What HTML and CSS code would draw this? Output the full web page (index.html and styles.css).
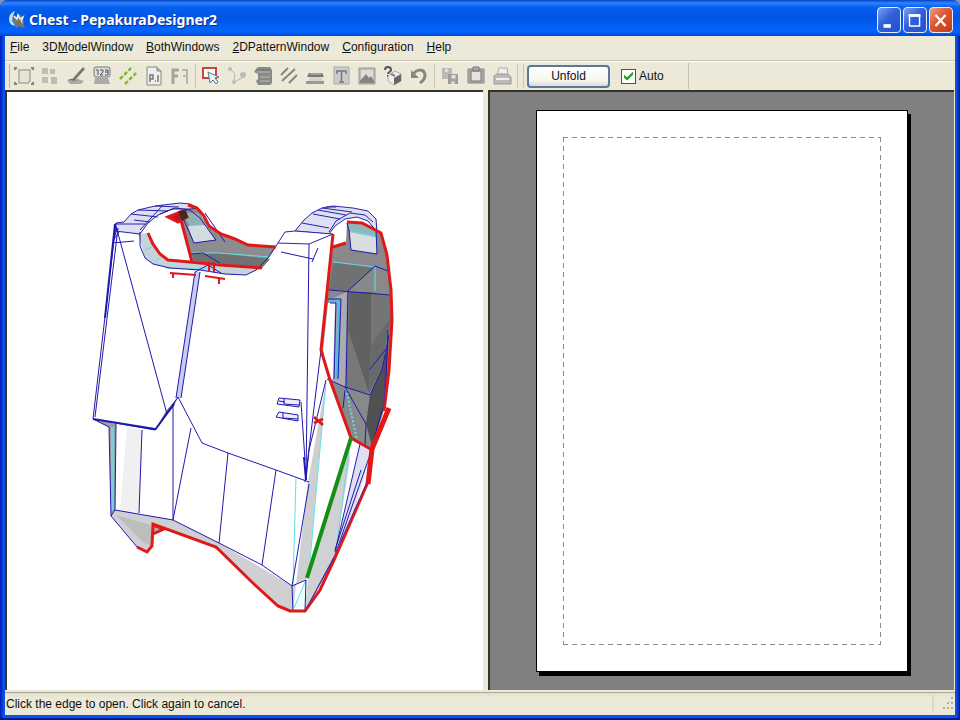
FILE: index.html
```html
<!DOCTYPE html>
<html lang="en">
<head>
<meta charset="utf-8">
<title>Chest - PepakuraDesigner2</title>
<link rel="stylesheet" href="styles.css">
</head>
<body>
<div class="window">
  <header class="titlebar">
    <svg class="app-icon" viewBox="0 0 18 20" aria-hidden="true">
      <path d="M7 1C1 3 0 9 2 13c2 3 5 3 7 2C4 13 4 6 7 1z" fill="#b9e4ff"/>
      <path d="M5 5l4 3 2-4 3 2 2 6-1 6-4-2-3 2-2-4-2-3z" fill="#5d7d96"/>
      <path d="M6 6l3 3 1-4 2 4 3-2-2 5 2 4" fill="none" stroke="#f2f2e8" stroke-width="1.5"/>
      <path d="M8 15l3-4 5 6" fill="none" stroke="#9a6a3a" stroke-width="2"/>
    </svg>
    <h1 class="title">Chest - PepakuraDesigner2</h1>
    <div class="caption-buttons">
      <button class="caption" aria-label="Minimize"><svg viewBox="0 0 24 25"><path d="M6 17h8v4H6z" fill="#fff"/></svg></button>
      <button class="caption" aria-label="Maximize"><svg viewBox="0 0 24 25"><path d="M6 8v11h11V8z" fill="none" stroke="#fff" stroke-width="1.5"/><path d="M5 6h13v3H5z" fill="#fff"/></svg></button>
      <button class="caption close" aria-label="Close"><svg viewBox="0 0 24 25"><path d="M6 7l11 12M17 7L6 19" stroke="#fff" stroke-width="2.5"/></svg></button>
    </div>
  </header>

  <div class="client">
    <nav class="menubar">
      <button><u>F</u>ile</button>
      <button>3D<u>M</u>odelWindow</button>
      <button><u>B</u>othWindows</button>
      <button><u>2</u>DPatternWindow</button>
      <button><u>C</u>onfiguration</button>
      <button><u>H</u>elp</button>
    </nav>

    <div class="toolbar">
      <span class="grip red"></span>
      <button class="tool" aria-label="Select area"><svg viewBox="0 0 20 20"><path d="M5 4h11v11l-2 2H5z" fill="#e6e4d6" stroke="#aaa89e" stroke-width="1.5"/><path d="M1 4V2h2M17 2h2v2M1 16v2h2M17 18h2v-2" fill="none" stroke="#88877f" stroke-width="2"/></svg></button>
      <button class="tool" aria-label="Arrange"><svg viewBox="0 0 20 20"><path d="M2 2h6v6H2zM10 3h5v5h-5zM2 11h6v6H2zM11 11h6v7h-6z" fill="#bebdb5"/></svg></button>
      <button class="tool" aria-label="Paint"><svg viewBox="0 0 20 20"><path d="M1 14l8-2 9 3-3 3H4z" fill="#aaa"/><path d="M17 1l2 2-8 9-5 4 2-5z" fill="#777"/><path d="M3 14l5-1 2 2" stroke="#666" fill="none"/></svg></button>
      <button class="tool" aria-label="Edge numbers"><svg viewBox="0 0 20 20"><path d="M3 12h13l2 6H2z" fill="#aaa"/><rect x="2" y="1" width="16" height="10" rx="2" fill="#ddd" stroke="#777"/><path d="M4 4h2v5M8 4h3v2L8 9h3M13 4h3v5h-3M13 6h3" fill="none" stroke="#555"/></svg></button>
      <button class="tool" aria-label="Fold lines"><svg viewBox="0 0 20 20"><path d="M2 13L13 2M7 18L18 7" stroke="#7dbb32" stroke-width="2.5" stroke-dasharray="4 2"/></svg></button>
      <button class="tool" aria-label="Page number"><svg viewBox="0 0 20 20"><path d="M3 1h10l4 4v14H3z" fill="#eee" stroke="#888"/><path d="M13 1v4h4" fill="#bbb" stroke="#888"/><path d="M6 16V9h3v4H6M11 15h1M14 9v7" fill="none" stroke="#777" stroke-width="1.5"/></svg></button>
      <button class="tool" aria-label="Mirror"><svg viewBox="0 0 20 20"><path d="M3 18V4h6M3 10h5" fill="none" stroke="#a5a49b" stroke-width="3"/><path d="M17 18V4h-5M17 10h-4" fill="none" stroke="#b8b7ae" stroke-width="2"/></svg></button>
      <span class="divider"></span>
      <button class="tool" aria-label="Open edge"><svg viewBox="0 0 20 20"><path d="M2 2h13v10H2z" fill="#fff" stroke="#c9443b" stroke-width="2"/><path d="M7 6l11 5-4 1 3 4-2 2-3-4-3 3z" fill="#dff4ff" stroke="#55788c"/></svg></button>
      <button class="tool" aria-label="Join edges"><svg viewBox="0 0 20 20"><path d="M3 3l5 5-1 8 8-4 2-4" fill="none" stroke="#b5b4aa"/><circle cx="3" cy="3" r="2" fill="#bbb"/><circle cx="7" cy="16" r="2" fill="#bbb"/><circle cx="16" cy="9" r="3" fill="#bbb"/></svg></button>
      <button class="tool" aria-label="Flaps"><svg viewBox="0 0 20 20"><path d="M3 3l2-2h12l2 3v13l-2 2H5l-2-4 2-2V8L1 6z" fill="#8a8a86"/><path d="M4 6h13M7 11h10M7 15h10" stroke="#bbb"/><path d="M4 4h13" stroke="#555" stroke-dasharray="1 1"/></svg></button>
      <button class="tool" aria-label="Hatching"><svg viewBox="0 0 20 20"><path d="M2 9l7-7M3 15L16 3M10 17l8-8" stroke="#858580" stroke-width="2"/></svg></button>
      <button class="tool" aria-label="Flatten"><svg viewBox="0 0 20 20"><path d="M4 7h13l2 4H2z" fill="#777"/><path d="M5 8h11" stroke="#ccc"/><path d="M5 11h11l2 4H3z" fill="#d5d4ca"/><path d="M1 15h18v3H1z" fill="#999"/></svg></button>
      <button class="tool" aria-label="Text"><svg viewBox="0 0 20 20"><path d="M3 1h15v17H3z" fill="#ccc" stroke="#aaa"/><path d="M6 8V5h9v3M10.500 5v11M8 16h5" fill="none" stroke="#777" stroke-width="1.5"/></svg></button>
      <button class="tool" aria-label="Image"><svg viewBox="0 0 20 20"><path d="M2 2h16v16H2z" fill="#bcbcb8" stroke="#999"/><path d="M4 4h12v9H4z" fill="#ddd"/><path d="M3 15l6-7 3 4 2-2 3 5v2H3z" fill="#858580"/></svg></button>
      <button class="tool" aria-label="Model help"><svg viewBox="0 0 20 20"><path d="M2 4c0-4 6-4 6 0 0 2-3 2-3 4M5 9v2" fill="none" stroke="#555" stroke-width="2"/><path d="M5 10l7-5 6 3v7l-7 4-6-4z" fill="#eee" stroke="#aaa"/><path d="M11 12l7-4v7l-7 4z" fill="#666"/><path d="M8 8l4 2" stroke="#888" stroke-width="2"/></svg></button>
      <button class="tool" aria-label="Undo"><svg viewBox="0 0 20 20"><path d="M4 9C7 3 15 2 16 9c0 4-2 6-5 8" fill="none" stroke="#888780" stroke-width="3"/><path d="M2 4v8h8z" fill="#888780"/></svg></button>
      <span class="divider"></span>
      <button class="tool" aria-label="Copy"><svg viewBox="0 0 20 20"><path d="M2 2h10v11H2z" fill="#bbb"/><path d="M8 8h10v10H8z" fill="#9b9b98"/><path d="M4 3v4h5V3M11 9v4h5V9M11 18v-3h4v3" fill="#ddd" stroke="#aaa"/></svg></button>
      <button class="tool" aria-label="Paste"><svg viewBox="0 0 20 20"><path d="M2 3h16v14H2z" fill="#aaa" stroke="#888"/><path d="M5 5h10v10H5z" fill="#e6e5dc" stroke="#777"/><path d="M7 1h6v4H7z" fill="#aaa" stroke="#777"/></svg></button>
      <button class="tool" aria-label="Print"><svg viewBox="0 0 20 20"><path d="M5 9l2-7h8l1 7" fill="#eee" stroke="#aaa"/><path d="M2 10l3-2h11l3 3v7H2z" fill="#bbb" stroke="#999"/><path d="M4 13h13" stroke="#eee" stroke-width="2"/></svg></button>
      <span class="grip end"></span>
      <span class="grip end"></span>
      <button class="unfold">Unfold</button>
      <label class="auto"><input type="checkbox" checked>Auto</label>
      <span class="rule"></span>
    </div>

    <main class="workspace">
      <section class="model-pane" aria-label="3D model">
        <svg class="model" viewBox="7 92 476 597" preserveAspectRatio="xMinYMin meet">
          <!-- back panel seen through the neck opening -->
          <path fill="#8d8d8f" d="M181 220L188 205 198 210 208 226 222 234 248 245 276 247 262 268 192 261z"/>
          <path fill="#6f7174" d="M192 254L218 253 270 259 262 268 194 261z"/>
          <path fill="#8fb2b4" d="M182 213L198 213 207 227 190 226z"/>
          <path fill="#d3dbe2" d="M188 226L206 225 215 240 194 243z"/>
          <path fill="#c4d2da" d="M138 234L148 233 153 244 160 254 170 260 220 265 262 268 246 275 225 274 200 270 170 268 153 264 145 258z"/>
          <!-- right opening interior -->
          <path fill="#88898b" d="M333 247L346 243 347 222 362 223 381 233 387 255 391 290 391 330 388 370 384 410 371 450 352 440 330 380 322 350 327 292z"/>
          <path fill="#707173" d="M333 262L375 267 348 291 329 290z"/>
          <path fill="#606163" d="M349 292L371 292 371 346 369 393 347 388z"/>
          <path fill="#747576" d="M371 292L391 296 391 330 371 346z"/>
          <path fill="#68696a" d="M371 346L390 318 382 370 369 393z"/>
          <path fill="#77787a" d="M348 330L369 393 347 388z"/>
          <path fill="#4f5052" d="M370 395L382 370 389 335 385 405 372 446 366 424z"/>
          <path fill="#a9abb3" d="M329 300L347 292 345 387 329 380z"/>
          <path fill="#fff" d="M328 303L335 303 333 379 328 379 323 350z"/>
          <path fill="#d9dde0" d="M349 230L376 235 377 254 351 250z"/>
          <path fill="#8eb8ba" d="M348 223L362 222 376 229 376 237 349 232z"/>
          <!-- shoulder straps -->
          <g fill="#dddff2" stroke="#2a22a8">
            <path d="M124 222L131 214 138 210 155 206 180 203 190 204 198 208 190 209 172 209 158 215 148 223 140 234 115 231 116 223z"/>
            <path fill="none" d="M116 224H146M131 214L158 217M138 210L168 211M155 206L179 207M134 220L150 222M163 205L140 230"/>
            <path d="M295 231L304 220 312 213 322 208 333 206 353 208 368 211 376 219 377 232 368 221 357 217 345 219 335 226 329 234z"/>
            <path fill="none" d="M302 223L329 228M313 214L340 219M322 208L352 212M329 232L336 221 350 213 365 215 373 222M326 207H336M318 210L346 215"/>
            <path fill="#fff" d="M278 243L285 232 295 231 333 234 309 244z"/>
          </g>
          <!-- side and lower faces -->
          <path fill="#9aa0a8" d="M93 419L116 424 115 510 111 516 109 427z"/>
          <path fill="#6ed3d8" d="M111 427h3v83h-3z"/>
          <path fill="#f0f0f0" d="M127 426L142 430 139 513 120 511z"/>
          <path fill="#c9cbef" d="M195 272h5L181 398h-5z"/>
          <path fill="#777" d="M155 430L166 411 178 397 174 406z"/>
          <path fill="#d0d0d2" d="M111 516L115 510 173 520 219 543 292 586 293 611 278 606 255 585 216 547 153 524 152 546 147 553 137 547z"/>
          <path fill="#bcbdbd" d="M116 515L151 525 151 546 143 542z"/>
          <path fill="#aaa" d="M153 524L164 529 154 534z"/>
          <path fill="#cecfd1" d="M326 382L308 578 292 586 293 611 308 482z"/>
          <path fill="#eff" d="M306 580L305 611 293 611z"/>
          <path fill="#d0d1d3" d="M349 450L308 578 305 611 335 555 350 460z"/>
          <path fill="#dfdff2" d="M360 445L371 452 357 503 335 555z"/>
          <g class="lines cyan">
            <path d="M145 250L152 247M153 264L162 256M191 253H218L270 257M333 262L375 267V291M349 231L376 237M326 382L309 572M296 477L293 586M349 450L336 552M306 580L294 608M165 268L205 269"/>
            <path stroke-width="3" stroke="#57b8dd" d="M329 300L339 301 337 378"/>
            <path stroke-width="2" stroke-dasharray="2 2" d="M346 389L357 440"/>
          </g>
          <g class="lines blue">
            <path d="M116 223L93 419M118 228L95 417M116 226L167 414M117 228L113 243M112 243L134 241M115 238L119 232M93 419L109 427 111 516 137 547M93 419L155 430 178 397 202 443 228 453 276 470 309 482M116 424L115 510M111 516L115 510 173 520 219 543 262 565 292 586 306 580M142 430L139 513M173 405V520M191 428L173 520M228 453L219 543M276 470L262 565"/>
            <path d="M195 272L176 398M200 272L181 398M140 232L140 246 145 258 153 264 170 268 200 270 225 274 246 275 256 270 268 258 278 243M160 214L175 208 190 210 200 218 210 232 216 240 194 243 182 216M191 254L203 253 220 263M205 213L225 242M195 272L208 265 221 273"/>
            <path d="M309 244L306 480M333 234L321 350 305 482M326 380L309 450 306 480M309 484L292 586 293 611M306 580L305 611M281 252L313 259M318 248L312 262M329 290L390 295M348 291L346 387M375 266L348 291M375 266L388 271M349 230L351 250 377 254 376 230M347 223L349 231"/>
            <path d="M328 299H341L338 379M330 303H336L334 379M327 379L345 387 370 395 382 370 389 335M370 369L386 349M345 387L366 424 365 445M345 390L343 408M388 330L385 400 372 446M360 444L335 552M371 452L335 555 305 611M361 470L335 550"/>
            <path stroke-width="2" d="M174 404L155 430M93 419L155 429M304 457L306 480M115 224L105 318"/>
            <path fill="#eef" d="M277 404L279 398 300 400 299 407zM276 417L279 412 298 415 298 421z"/>
            <path d="M284 398V404L299 405M283 413V418L298 419M301 402L305 460M279 401L285 402"/>
          </g>
          <g class="lines red">
            <path d="M148 233L153 244 160 254 168 260 190 262 220 265 262 268M181 220L192 262M188 205L197 208 204 216 209 226 221 234 235 239 248 245 276 247"/>
            <path stroke-width="2" d="M170 273L196 275M205 276L225 279M209 262V272M214 262V272M173 273V278M219 278V284"/>
            <path fill="#b01a20" d="M168 217L183 211 187 217 178 222z"/>
            <path d="M333 234L327 292 321 350 330 380 351 438 372 450M333 247L346 243"/>
            <path d="M347 222L362 223 381 233 387 255 391 290 392 320 389 370 384 411"/>
            <path stroke-width="5" d="M389 408L372 449 368 484"/>
            <path d="M368 482L358 505 335 558 320 590 305 611 290 611 278 606 255 585 216 547 153 524 152 546 147 552 137 547M153 525L164 529 153 534M314 417L323 425M323 419L314 423"/>
          </g>
          <path fill="#43282b" d="M178 211L186 210 188 217 182 221z"/>
          <path d="M351 438L307 578" stroke="#159015" stroke-width="4"/>
          <path d="M334 558L307 608M367 482L340 543M386 350L384 404" stroke="#56309a" fill="none"/>
        </svg>
      </section>
      <section class="pattern-pane" aria-label="2D pattern">
        <div class="sheet"><div class="printable"></div></div>
      </section>
    </main>

    <footer class="statusbar">
      <span>Click the edge to open. Click again to cancel.</span>
      <svg class="resize" viewBox="0 0 24 20" aria-hidden="true"><path d="M2 1v16" stroke="#c8c5b2"/><path d="M20 3h2v2h-2zM16 8h2v2h-2zM20 8h2v2h-2zM12 13h2v2h-2zM16 13h2v2h-2zM20 13h2v2h-2z" fill="#b9ad9b"/></svg>
    </footer>
  </div>
</div>
</body>
</html>
```
FILE: styles.css
```css
* {
  box-sizing: border-box;
}

body {
  margin: 0;
  background: #7f93b8;
  color: #111;
  font: 12px/16px "Liberation Sans", sans-serif;
}

button {
  margin: 0;
  padding: 0;
  border: 0;
  background: none;
  color: inherit;
  font: inherit;
}

.window {
  display: flex;
  flex-direction: column;
  min-height: 100vh;
  padding: 0 5px 5px;
  border-radius: 8px 8px 0 0;
  background: linear-gradient(90deg, #0019c0, #0a55e6 4px, #0a55e6 calc(100% - 4px), #0019a8);
  box-shadow: inset 0 -2px #001a9c;
}

.titlebar {
  display: flex;
  align-items: center;
  height: 36px;
  margin: 0 -5px;
  padding: 3px 7px 0 8px;
  border-radius: 8px 8px 0 0;
  background: linear-gradient(#0a3fc4, #2a86ff 3px, #0760ee 7px, #0054e3 18px, #0262fb 28px, #0262fb 32px, #0048d0);
}

.app-icon {
  width: 18px;
  height: 20px;
  margin-right: 3px;
}

.title {
  flex: 1;
  margin: 0;
  color: #fff;
  font: bold 14px/20px "Noto Sans", "Open Sans", sans-serif;
  text-shadow: 1px 1px #0b2f86;
}

.caption-buttons {
  display: flex;
  gap: 2px;
}

.caption {
  width: 24px;
  height: 26px;
  border: 1px solid #e6eefc;
  border-radius: 4px;
  background: linear-gradient(135deg, #7ba1f2, #2f5fd9 45%, #2450cd);
}

.caption.close {
  background: linear-gradient(135deg, #eba088, #dc5431 45%, #c23c18);
}

.caption svg {
  display: block;
  width: 100%;
  height: 100%;
}

.client {
  display: flex;
  flex: 1;
  flex-direction: column;
  background: #ece9d8;
}

.menubar {
  display: flex;
  gap: 13px;
  height: 25px;
  padding: 0 5px 2px;
  border-bottom: 1px solid #c5c2b0;
}

.toolbar {
  display: flex;
  align-items: center;
  height: 29px;
  border-top: 1px solid #fff;
}

.grip {
  width: 2px;
  height: 24px;
  border: solid #c9c6b5;
  border-width: 0 1px 0 0;
}

.grip.red {
  margin: 0 1px 0 3px;
  border-color: #d9a39a;
}

.grip.end {
  margin: 0 3px 0 1px;
}

.tool {
  width: 26px;
  height: 26px;
  padding: 3px;
}

.tool svg {
  display: block;
  width: 20px;
  height: 20px;
}

.divider {
  width: 1px;
  height: 24px;
  margin: 0 2px;
  background: #c9c6b5;
}

.unfold {
  width: 83px;
  height: 23px;
  border: 2px solid #58799d;
  border-radius: 4px;
  background: linear-gradient(#fff, #f6f6f2 70%, #dedbd0);
}

.auto {
  display: flex;
  align-items: center;
  gap: 3px;
  margin-left: 11px;
}

.auto input {
  appearance: none;
  display: grid;
  place-items: center;
  width: 15px;
  height: 15px;
  margin: 0;
  border: 1px solid #2c5a86;
  background: #fff;
}

.auto input:checked::before {
  content: "";
  width: 9px;
  height: 9px;
  background: #22a122;
  clip-path: polygon(0 35%, 35% 65%, 100% 0, 100% 35%, 35% 100%, 0 70%);
}

.rule {
  width: 1px;
  height: 26px;
  margin-left: 24px;
  background: #c5c2b0;
}

.workspace {
  display: grid;
  flex: 1;
  grid-template-columns: minmax(0, 478fr) minmax(0, 466fr);
  gap: 5px;
  padding-right: 1px;
}

.model-pane,
.pattern-pane {
  border: solid #33322b;
  border-width: 2px 0 0 2px;
}

.model-pane {
  background: #fff;
}

.model {
  display: block;
  width: 100%;
}

.lines {
  fill: none;
  stroke-width: 1;
}

.cyan {
  stroke: #62dfe4;
}

.blue {
  stroke: #2018b0;
}

.red {
  stroke: #e01818;
  stroke-width: 3;
}

.pattern-pane {
  padding: 18px 46px;
  background: #808080;
}

.sheet {
  aspect-ratio: 372 / 562;
  padding: 26px;
  border: 1px solid #000;
  background: #fff;
  box-shadow: 3px 4px #000;
}

.printable {
  --across: repeating-linear-gradient(90deg, #8a8a8a 0 5px, #fff 5px 9px);
  --down: repeating-linear-gradient(#8a8a8a 0 5px, #fff 5px 9px);
  height: 100%;
  background:
    var(--across) top / 100% 1px no-repeat,
    var(--across) bottom / 100% 1px no-repeat,
    var(--down) left / 1px 100% no-repeat,
    var(--down) right / 1px 100% no-repeat;
}

.statusbar {
  display: flex;
  align-items: center;
  justify-content: space-between;
  height: 23px;
  margin-top: 2px;
  padding-left: 1px;
  border-top: 1px solid #aaa794;
  background: linear-gradient(#e2dfce, #ece9d8 5px);
}

.resize {
  width: 24px;
  height: 20px;
}
```
